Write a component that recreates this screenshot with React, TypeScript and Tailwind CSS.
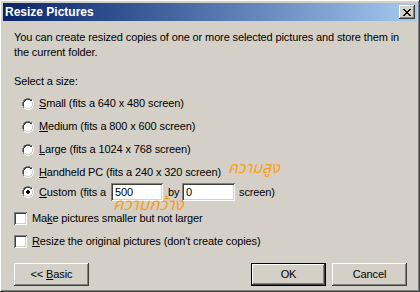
import React from "react";

const raised =
  "shadow-[inset_-1px_-1px_#404040,inset_1px_1px_#ffffff,inset_-2px_-2px_#808080,inset_2px_2px_#d4d0c8]";
const sunken =
  "shadow-[inset_1px_1px_#808080,inset_-1px_-1px_#ffffff,inset_2px_2px_#404040,inset_-2px_-2px_#d4d0c8]";

function Radio({ checked }: { checked?: boolean }) {
  return (
    <svg width="12" height="12" viewBox="0 0 12 12" className="shrink-0">
      <path d="M4 0h4v1h2v1h1v2h1v4h-1v2h-1v1h-2v1h-4v-1h-2v-1h-1v-2h-1v-4h1v-2h1v-1h2z" fill="#ffffff" />
      <path d="M4 0h4v1h2v1h-2v-1h-4v1h-2v2h-1v4h1v2h-1v-2h-1v-4h1v-2h1v-1h2z" fill="#808080" />
      <path d="M4 1h4v1h2v1h-2v-1h-4v1h-1v1h-1v4h-1v-4h1v-2h1v-1h2z" fill="#404040" />
      <path d="M10 2h1v2h1v4h-1v2h-1v1h-2v1h-4v-1h-2v-1h2v1h4v-1h2v-2h1v-4h-1z" fill="#ffffff" />
      <path d="M10 3h0v1h1v4h-1v2h-2v1h-4v-1h-2v-1h2v1h4v-1h1v-1h1v-4h-1z" fill="#d4d0c8" />
      {checked && <path d="M5 4h2v1h1v2h-1v1h-2v-1h-1v-2h1z" fill="#000000" />}
    </svg>
  );
}

function Check() {
  return <div className={`w-[13px] h-[13px] bg-white shrink-0 ${sunken}`} />;
}

function Btn({ children, def }: { children: React.ReactNode; def?: boolean }) {
  if (def) {
    return (
      <div className="w-[75px] h-[23px] border border-black flex">
        <div className="flex-1 flex items-center justify-center bg-[#d4d0c8] shadow-[inset_-1px_-1px_#404040,inset_1px_1px_#ffffff,inset_-2px_-2px_#808080]">
          <span>{children}</span>
        </div>
      </div>
    );
  }
  return (
    <div className={`w-[75px] h-[23px] flex items-center justify-center bg-[#d4d0c8] ${raised}`}>
      <span>{children}</span>
    </div>
  );
}

export default function App() {
  return (
    <div
      className={`relative w-[420px] h-[292px] overflow-hidden bg-[#d4d0c8] p-[3px] flex flex-col text-[11px] leading-[15px] tracking-[-0.12px] text-black ${raised}`}
      style={{ fontFamily: '"Liberation Sans", Arial, sans-serif' }}
    >
      {/* Title bar */}
      <div className="h-[18px] shrink-0 flex items-center justify-between pl-[2px] pr-[2px] bg-gradient-to-r from-[#0a246a] to-[#a6caf0]">
        <span className="text-white font-bold text-[12px] tracking-normal">Resize Pictures</span>
        <div className={`w-[16px] h-[14px] bg-[#d4d0c8] flex items-center justify-center ${raised}`}>
          <svg width="8" height="7" viewBox="0 0 8 7">
            <path d="M0 0h2v1h1v1h2v-1h1v-1h2v1h-1v1h-1v1h-1v1h1v1h1v1h1v1h-2v-1h-1v-1h-2v1h-1v1h-2v-1h1v-1h1v-1h1v-1h-1v-1h-1v-1h-1z" fill="#000" />
          </svg>
        </div>
      </div>

      <div className="flex flex-col pl-[11px] pr-[8px] pt-[9px]">
        <p>
          You can create resized copies of one or more selected pictures and store them in
          <br />
          the current folder.
        </p>
        <div className="mt-[14px] h-[15px]">Select a size:</div>
        <div className="flex flex-col pl-[8px] mt-[3px]">
          <div className="h-[23px] flex items-center gap-[5px]">
            <Radio />
            <span>
              <u>S</u>mall (fits a 640 x 480 screen)
            </span>
          </div>
          <div className="h-[23px] flex items-center gap-[5px]">
            <Radio />
            <span>
              <u>M</u>edium (fits a 800 x 600 screen)
            </span>
          </div>
          <div className="h-[23px] flex items-center gap-[5px]">
            <Radio />
            <span>
              <u>L</u>arge (fits a 1024 x 768 screen)
            </span>
          </div>
          <div className="h-[22px] flex items-center gap-[5px]">
            <Radio />
            <span>
              <u>H</u>andheld PC (fits a 240 x 320 screen)
            </span>
          </div>
          <div className="h-[18px] flex items-center">
            <Radio checked />
            <span className="ml-[5px] w-[41px]">
              <u>C</u>ustom
            </span>
            <span className="w-[31px]">(fits a</span>
            <div className={`w-[52px] h-[18px] bg-white pl-[4px] flex items-center ${sunken}`}>500</div>
            <span className="ml-[5px] w-[14px]">by</span>
            <div className={`w-[53px] h-[18px] bg-white pl-[4px] flex items-center ${sunken}`}>0</div>
            <span className="ml-[4px]">screen)</span>
          </div>
        </div>
        <div className="flex flex-col mt-[6px]">
          <div className="h-[23px] flex items-center gap-[5px]">
            <Check />
            <span>
              Ma<u>k</u>e pictures smaller but not larger
            </span>
          </div>
          <div className="h-[23px] flex items-center gap-[5px]">
            <Check />
            <span>
              <u>R</u>esize the original pictures (don't create copies)
            </span>
          </div>
        </div>
        <div className="flex items-center mt-[10px]">
          <Btn>
            &lt;&lt; <u>B</u>asic
          </Btn>
          <div className="flex-1" />
          <Btn def>OK</Btn>
          <div className="w-[6px]" />
          <Btn>Cancel</Btn>
          <div className="w-[2px]" />
        </div>
      </div>

      {/* Annotations */}
      <span
        className="absolute left-[228px] top-[159px] text-[16px] leading-[18px] italic tracking-normal text-[#f5a01a]"
        style={{ fontFamily: '"Noto Sans Thai", "DejaVu Sans", sans-serif' }}
      >
        ความสูง
      </span>
      <span
        className="absolute left-[113px] top-[196px] text-[17px] leading-[18px] italic tracking-normal text-[#f5a01a]"
        style={{ fontFamily: '"Noto Sans Thai", "DejaVu Sans", sans-serif' }}
      >
        ความกว้าง
      </span>
    </div>
  );
}
